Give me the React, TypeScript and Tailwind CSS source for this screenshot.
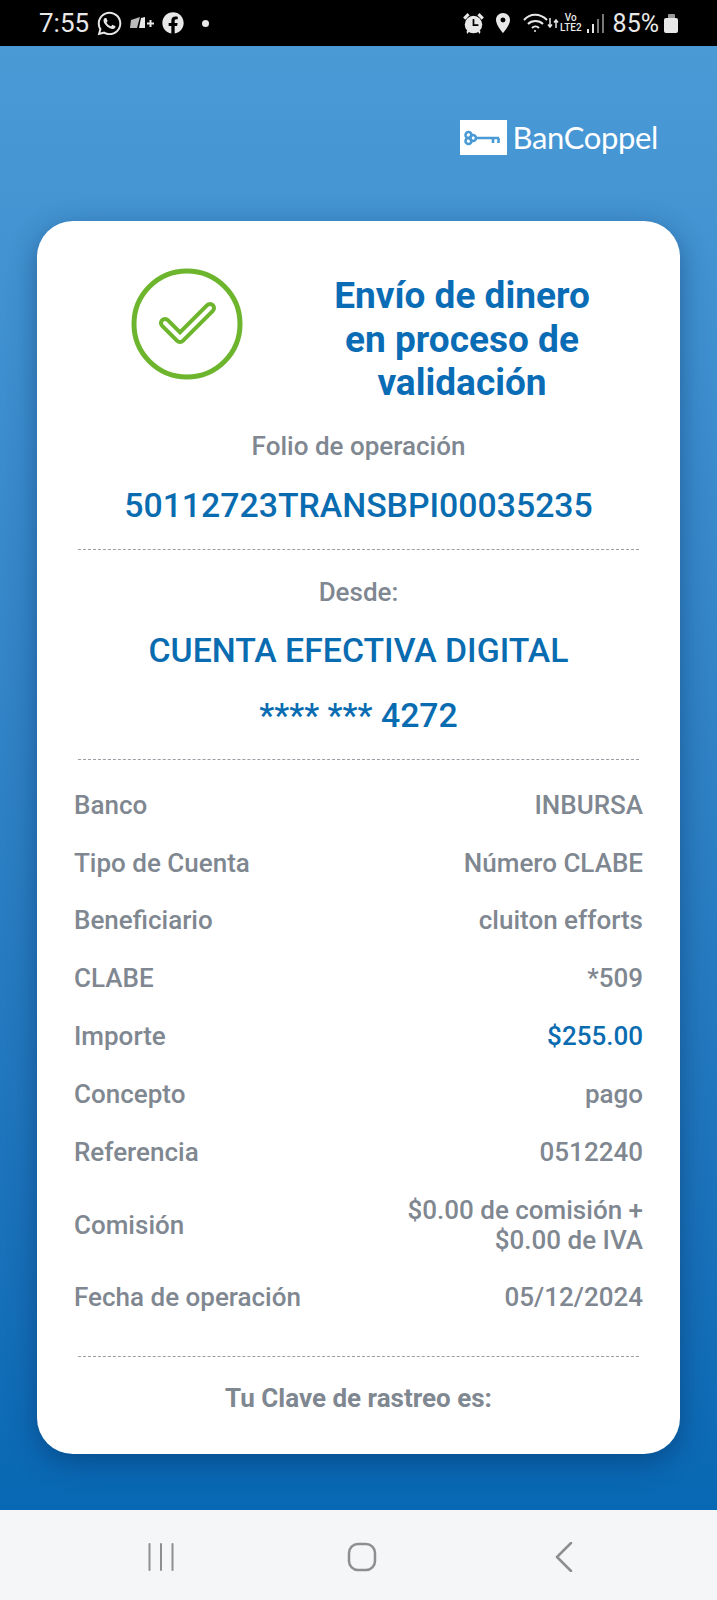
import { FaWhatsapp, FaFacebook } from "react-icons/fa";
import { MdLocationOn } from "react-icons/md";

const rows = [
  { label: "Banco", value: "INBURSA" },
  { label: "Tipo de Cuenta", value: "Número CLABE" },
  { label: "Beneficiario", value: "cluiton efforts" },
  { label: "CLABE", value: "*509" },
  { label: "Importe", value: "$255.00", blue: true },
  { label: "Concepto", value: "pago" },
  { label: "Referencia", value: "0512240" },
];

const Row = ({ label, value, blue }: { label: string; value: string; blue?: boolean }) => (
  <div className="flex h-[57.8px] items-center justify-between">
    <span>{label}</span>
    <span className={blue ? "text-[#0a6cb0]" : ""}>{value}</span>
  </div>
);

const Dash = () => <div className="border-t border-dashed border-[#9a9fa6]" />;

const StatusBar = () => (
  <div className="flex h-[46px] shrink-0 items-center justify-between bg-black pl-[39px] pr-[39px] text-[#e8e8e8]">
    <div className="flex items-center">
      <span className="text-[26px] leading-none">7:55</span>
      <FaWhatsapp className="ml-[7px] text-[27px]" />
      <svg className="ml-[7px]" width="24" height="14" viewBox="0 0 24 14" fill="currentColor">
        <path d="M1 4 L10 1 L7 12 L0 12 Z" opacity="0.8" />
        <path d="M11 2 L15 1 L15 12 L9 12 Z" />
        <path d="M17 6.5 H24 V8.5 H17 Z M19.5 4 H21.5 V11 H19.5 Z" />
      </svg>
      <FaFacebook className="ml-[8px] text-[22px]" />
      <span className="ml-[18px] h-[7px] w-[7px] rounded-full bg-[#e8e8e8]" />
    </div>
    <div className="flex items-center">
      <svg width="23" height="23" viewBox="0 0 21 21" fill="currentColor">
        <circle cx="10.5" cy="11.5" r="8" />
        <path d="M1 5 L5 1 L7 3 L3 7 Z M20 5 L16 1 L14 3 L18 7 Z M4 18 L6 16 L7 17 L5 20 Z M17 18 L15 16 L14 17 L16 20 Z" />
        <path d="M10.5 6.5 V12 H15" fill="none" stroke="#000" strokeWidth="1.6" />
      </svg>
      <MdLocationOn className="ml-[6px] text-[24px]" />
      <svg className="ml-[8px]" width="27" height="23" viewBox="0 0 27 23" fill="none" stroke="currentColor" strokeWidth="2">
        <path d="M1 8 C7 1 17 1 24 8 M5 12 C9 8 16 8 20 12 M9 16 C11 14 14 14 16 16" />
        <circle cx="12" cy="19" r="1" fill="currentColor" stroke="none" />
      </svg>
      <svg className="-ml-[3px]" width="12" height="14" viewBox="0 0 12 14" fill="none" stroke="currentColor" strokeWidth="1.5">
        <path d="M3 2 V11 M1 8.5 L3 11 L5 8.5 M9 12 V4 M7 6.5 L9 4 L11 6.5" />
      </svg>
      <div className="ml-[1px] flex flex-col items-center text-[10px] font-medium leading-[10px]">
        <span>Vo</span>
        <span>LTE2</span>
      </div>
      <div className="ml-[5px] flex h-[20px] items-end gap-[3px]">
        <span className="h-[4px] w-[2px] bg-[#e8e8e8]" />
        <span className="h-[9px] w-[2px] bg-[#e8e8e8]" />
        <span className="h-[14px] w-[2px] bg-[#777]" />
        <span className="h-[19px] w-[2px] bg-[#777]" />
      </div>
      <span className="ml-[9px] text-[25px] leading-none">85%</span>
      <div className="ml-[5px] flex flex-col items-center">
        <span className="h-[4px] w-[7px] rounded-t-[1px] bg-[#999]" />
        <span className="h-[15px] w-[14px] rounded-[2px] bg-[#e8e8e8]" />
      </div>
    </div>
  </div>
);

const Logo = () => (
  <div className="flex items-center justify-end pr-[59px] pt-[74px] text-white">
    <div className="flex h-[35px] w-[47px] items-center justify-center bg-white">
      <svg width="38" height="16" viewBox="0 0 38 16" fill="none" stroke="#4a9ad6" strokeWidth="2.6">
        <circle cx="4.5" cy="5" r="3" />
        <circle cx="4.5" cy="11" r="3" />
        <circle cx="9" cy="8" r="3" />
        <path d="M12 8 H35 M34.5 8 V13 M29 8 V13" />
      </svg>
    </div>
    <span className="ml-[6px] font-['Lato',sans-serif] text-[31px] leading-none tracking-[-0.35px]">BanCoppel</span>
  </div>
);

const App = () => (
  <div className="flex h-[1600px] w-[717px] flex-col overflow-hidden font-['Roboto',sans-serif]">
    <StatusBar />
    <div className="flex flex-1 flex-col bg-gradient-to-b from-[#4a9ad6] to-[#0768b3]">
      <Logo />
      <div className="mx-[37px] mt-[66px] h-[1233px] rounded-[36px] bg-white px-[41px] pt-[52px] text-[26px] font-medium text-[#7f8791] shadow-[0_8px_28px_rgba(0,40,90,0.45)]">
        <div className="flex items-start">
          <svg className="ml-[53px] mt-[-5px]" width="112" height="112" viewBox="0 0 112 112" fill="none">
            <circle cx="56" cy="56" r="53" stroke="#6cb52d" strokeWidth="5" />
            <path d="M34 55 L49 70 L79 40" stroke="#6cb52d" strokeWidth="12" strokeLinecap="round" strokeLinejoin="round" />
            <path d="M34 55 L49 70 L79 40" stroke="#fff" strokeWidth="4" strokeLinecap="round" strokeLinejoin="round" />
          </svg>
          <h1 className="ml-[79px] mt-[1px] w-[280px] text-center text-[37px] font-bold leading-[43.5px] text-[#0a6cb5]">
            Envío de dinero
            <br />
            en proceso de
            <br />
            validación
          </h1>
        </div>
        <p className="mt-[23px] text-center leading-[36px]">Folio de operación</p>
        <p className="mt-[24px] text-center text-[33.8px] font-medium leading-[36px] text-[#0a6cb0]">50112723TRANSBPI00035235</p>
        <div className="mt-[25px]"><Dash /></div>
        <p className="mt-[24px] text-center leading-[36px]">Desde:</p>
        <p className="mt-[23px] text-center text-[33.8px] font-medium leading-[36px] text-[#0a6cb0]">CUENTA EFECTIVA DIGITAL</p>
        <p className="mt-[29px] text-center text-[33.8px] font-medium leading-[36px] text-[#0a6cb0]">**** *** 4272</p>
        <div className="mt-[25px]"><Dash /></div>
        <div className="-mx-[4px] mt-[17px]">
          {rows.map((r) => (
            <Row key={r.label} {...r} />
          ))}
          <div className="mb-[14px] mt-[14px] flex items-center justify-between">
            <span>Comisión</span>
            <span className="text-right leading-[30px]">
              $0.00 de comisión +
              <br />
              $0.00 de IVA
            </span>
          </div>
          <Row label="Fecha de operación" value="05/12/2024" />
        </div>
        <div className="mt-[29px]"><Dash /></div>
        <p className="mt-[23px] text-center font-bold leading-[36px]">Tu Clave de rastreo es:</p>
      </div>
    </div>
    <div className="flex h-[90px] shrink-0 items-center bg-[#f5f6f8] pl-[148px] pt-[4px] text-[#8e8e8e]">
      <svg width="26" height="28" viewBox="0 0 26 28" stroke="currentColor" strokeWidth="2" strokeLinecap="round">
        <path d="M1.5 1 V27 M13 1 V27 M24.5 1 V27" />
      </svg>
      <svg className="ml-[173px]" width="30" height="30" viewBox="0 0 30 30" fill="none" stroke="currentColor" strokeWidth="2.5">
        <rect x="2" y="2" width="26" height="26" rx="9" />
      </svg>
      <svg className="ml-[178px]" width="18" height="30" viewBox="0 0 18 30" fill="none" stroke="currentColor" strokeWidth="2.5" strokeLinecap="round" strokeLinejoin="round">
        <path d="M16 1 L2 15 L16 29" />
      </svg>
    </div>
  </div>
);

export default App;
